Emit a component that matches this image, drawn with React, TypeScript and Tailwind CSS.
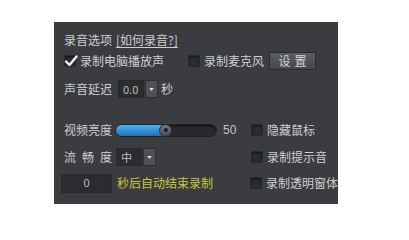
import { ReactNode } from 'react'

const font = { fontFamily: '"Noto Sans CJK SC", "Noto Sans", sans-serif' }

const CheckBox = ({ checked = false }: { checked?: boolean }) => (
  <span className="relative w-[12px] h-[12px] shrink-0 rounded-[2px] bg-[#2b2c2f] border border-[#262729] shadow-[inset_0_1px_2px_rgba(0,0,0,0.6)]">
    {checked && (
      <svg viewBox="0 0 14 14" className="absolute -left-[1px] -top-[2px] w-[14px] h-[14px]">
        <path d="M2 7.5 L5.5 11 L12.5 2.5" fill="none" stroke="#f2f2f2" strokeWidth="2.4" strokeLinecap="round" strokeLinejoin="round" />
      </svg>
    )}
  </span>
)

const Check = ({ label, checked }: { label: string; checked?: boolean }) => (
  <div className="flex items-center gap-[4px] whitespace-nowrap">
    <CheckBox checked={checked} />
    <span className="text-[12px] leading-none text-[#cfcfcf]">{label}</span>
  </div>
)

const Select = ({ value, width }: { value: string; width: string }) => (
  <div className="flex items-center h-[18px] gap-[1px]">
    <div className={`${width} h-full flex items-center pl-[4px] bg-[#2b2c2f] border border-[#27282a] text-[11px] text-[#bdbdbd]`}>
      {value}
    </div>
    <div className="w-[13px] h-full flex items-center justify-center bg-[#505155] border border-[#2c2d30]">
      <svg viewBox="0 0 6 4" className="w-[5px] h-[3px]">
        <path d="M0 0 H6 L3 4 Z" fill="#e0e0e0" />
      </svg>
    </div>
  </div>
)

const Row = ({ children, className = '' }: { children: ReactNode; className?: string }) => (
  <div className={`flex items-center h-[22px] whitespace-nowrap ${className}`}>{children}</div>
)

export default function App() {
  return (
    <div className="w-[409px] h-[204px] bg-white overflow-hidden" style={font}>
      <div className="ml-[54px] mt-[22px] w-[284px] h-[182px] bg-[#3b3c40] pl-[10px] pt-[8px] text-[#cfcfcf]">
        <div className="flex items-center h-[20px] gap-[4px] text-[12px] leading-none">
          <span>录音选项</span>
          <span className="underline underline-offset-2">[如何录音?]</span>
        </div>

        <Row>
          <div className="w-[124px] flex items-center">
            <Check label="录制电脑播放声" checked />
          </div>
          <Check label="录制麦克风" />
          <button className="ml-[5px] w-[47px] h-[18px] flex items-center justify-center bg-gradient-to-b from-[#5a5c60] to-[#46484b] border border-[#2a2b2d] text-[12px] leading-none text-[#d6d6d6] tracking-[4px] pl-[4px]">
            设置
          </button>
        </Row>

        <Row className="mt-[6px]">
          <span className="text-[12px] leading-none w-[54px]">声音延迟</span>
          <Select value="0.0" width="w-[26px]" />
          <span className="ml-[3px] text-[12px] leading-none">秒</span>
        </Row>

        <Row className="mt-[19px]">
          <div className="w-[187px] flex items-center">
            <span className="text-[12px] leading-none w-[51px]">视频亮度</span>
            <div className="relative w-[102px] h-[13px] rounded-full bg-[#28292c] border border-[#222325] shadow-[inset_0_1px_2px_rgba(0,0,0,0.7)]">
              <div className="h-full w-[50px] rounded-full bg-gradient-to-b from-[#4fb3f0] to-[#1f6fb8]" />
              <div className="absolute left-[43px] -top-[1px] w-[13px] h-[13px] rounded-full bg-gradient-to-b from-[#7a7b7f] to-[#4b4c50] border border-[#2a2b2e] flex items-center justify-center">
                <div className="w-[4px] h-[4px] rounded-full bg-[#1e1f21]" />
              </div>
            </div>
            <span className="ml-[6px] text-[12px] leading-none text-[#c4c4c4]" style={{ fontFamily: '"Liberation Sans", sans-serif' }}>
              50
            </span>
          </div>
          <Check label="隐藏鼠标" />
        </Row>

        <Row className="mt-[5px]">
          <div className="w-[187px] flex items-center">
            <span className="text-[12px] leading-none w-[52px] tracking-[6px]">流畅度</span>
            <Select value="中" width="w-[26px]" />
          </div>
          <Check label="录制提示音" />
        </Row>

        <Row className="mt-[4px]">
          <div className="w-[187px] flex items-center">
            <div className="-ml-[3px] w-[51px] h-[19px] flex items-center justify-center bg-[#2b2c2f] border border-[#27282a] text-[11px] text-[#bdbdbd]" style={{ fontFamily: '"Liberation Sans", sans-serif' }}>
              0
            </div>
            <span className="ml-[5px] text-[12px] leading-none text-[#c9c93c]">秒后自动结束录制</span>
          </div>
          <Check label="录制透明窗体" />
        </Row>
      </div>
    </div>
  )
}
